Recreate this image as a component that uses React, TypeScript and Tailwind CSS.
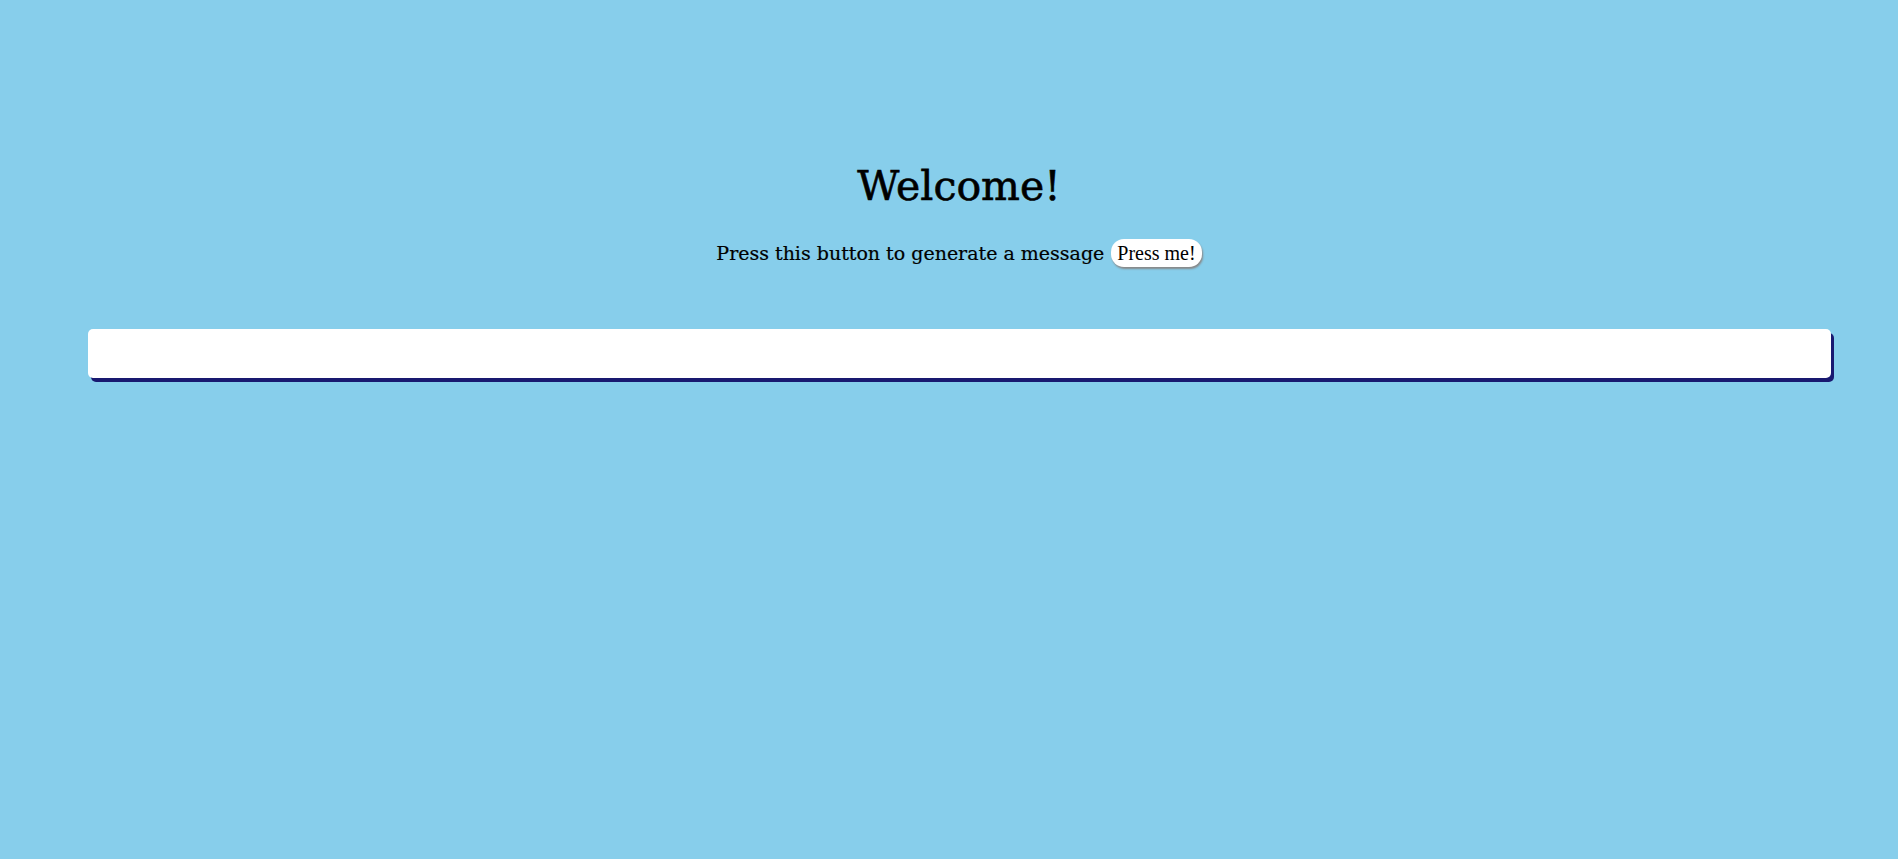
export default function App() {
  return (
    <div
      className="min-h-[859px] w-full bg-[#87ceeb] text-black"
      style={{ fontFamily: '"DejaVu Serif", serif' }}
    >
      <div className="flex flex-col items-center pt-[161px] pl-[20px]">
        <h1 className="text-[41px] leading-[50px] [-webkit-text-stroke:0.6px_black]">Welcome!</h1>
        <p className="mt-[28px] flex items-center gap-[7px] text-[19px] leading-[28px] [-webkit-text-stroke:0.2px_black]">
          <span>Press this button to generate a message</span>
          <button
            className="h-[28px] rounded-[13px] bg-white px-[6px] text-[20px] leading-[24px] shadow-[1px_2px_2px_#888] [-webkit-text-stroke:0px]"
            style={{ fontFamily: '"Liberation Serif", serif' }}
          >
            Press me!
          </button>
        </p>
      </div>
      <div className="mt-[62px] ml-[88px] mr-[67px] h-[49px] rounded-[5px] bg-white shadow-[3px_4px_0_#191970]" />
    </div>
  );
}
